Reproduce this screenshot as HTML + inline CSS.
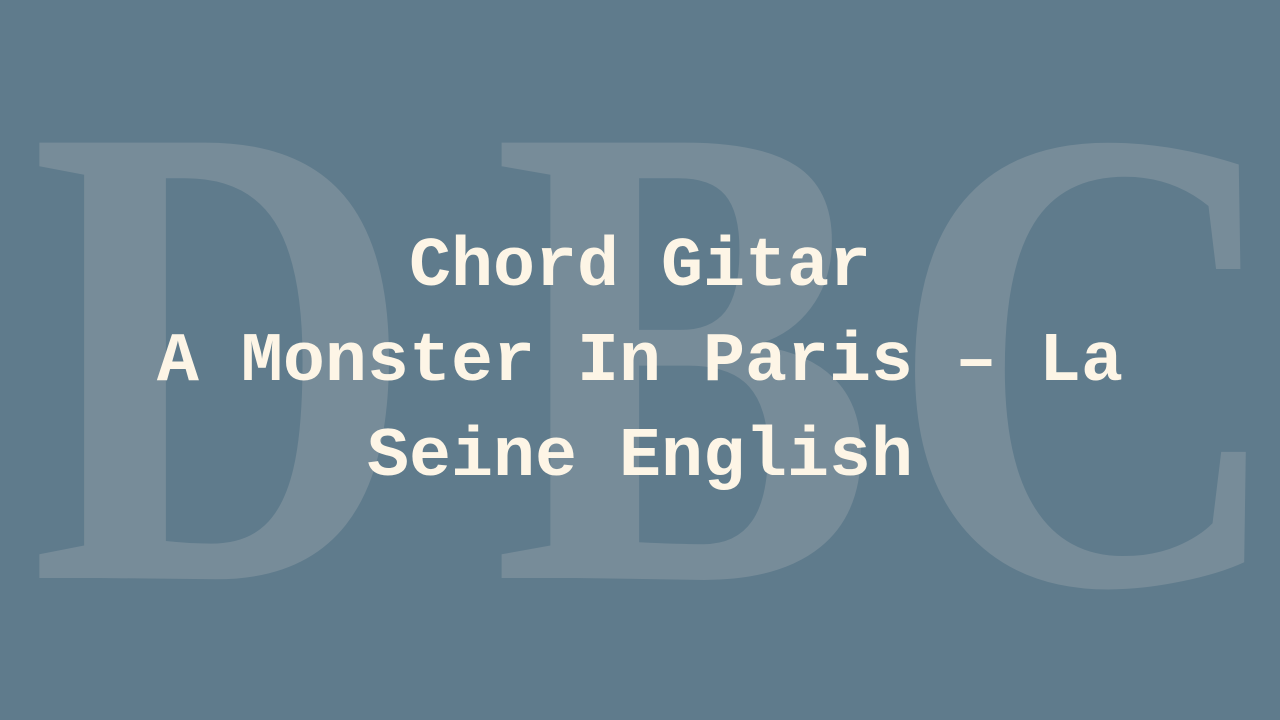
<!DOCTYPE html>
<html><head><style>
html,body{margin:0;padding:0;}
body{width:1280px;height:720px;background:#5f7b8c;position:relative;overflow:hidden;}
svg{position:absolute;left:0;top:0;}
.t{position:absolute;left:0;width:1280px;top:220px;text-align:center;font-family:"Liberation Mono",monospace;font-weight:bold;font-size:70px;line-height:95px;color:#fdf5e6;}
</style></head><body>
<svg width="1280" height="720">
<g fill="#778c99" font-family="Liberation Serif,serif" font-weight="bold" font-size="665">
<text x="30" y="578" textLength="385" lengthAdjust="spacingAndGlyphs">D</text>
<text x="492" y="578" textLength="385" lengthAdjust="spacingAndGlyphs">B</text>
<text x="888" y="583" textLength="400" lengthAdjust="spacingAndGlyphs">C</text>
</g></svg>
<div class="t">Chord Gitar<br>A Monster In Paris – La<br>Seine English</div>
</body></html>
